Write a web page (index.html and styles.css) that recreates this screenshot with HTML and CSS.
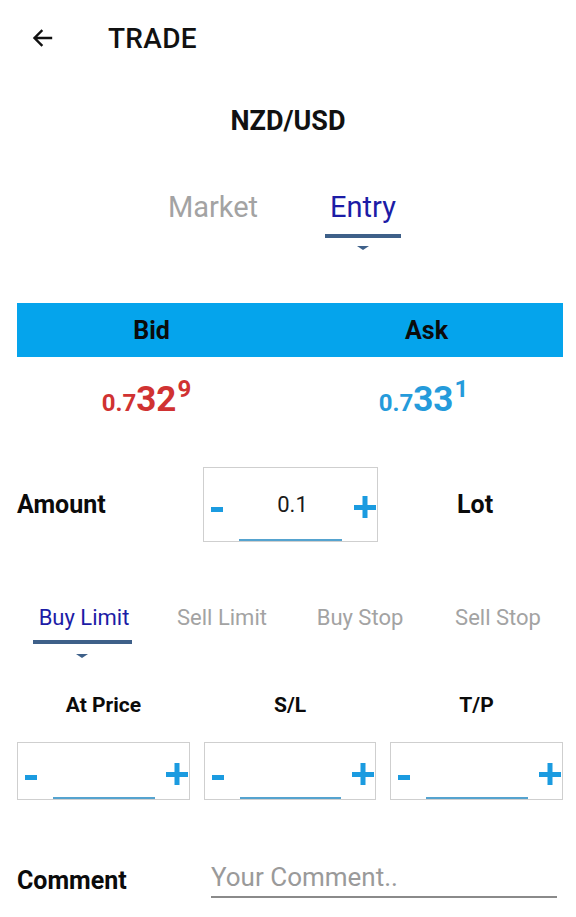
FILE: index.html
```html
<!DOCTYPE html>
<html>
<head>
<meta charset="utf-8">
<link rel="stylesheet" href="styles.css">
</head>
<body>
<div class="screen">
  <header class="topbar">
    <svg class="back" width="24" height="24" viewBox="0 0 24 24"><path d="M21 12H5M11.5 5l-7 7 7 7" fill="none" stroke="#111" stroke-width="2.4" stroke-linecap="square"/></svg>
    <span class="title">TRADE</span>
  </header>

  <div class="pair">NZD/USD</div>

  <div class="tabs">
    <div class="tab">Market</div>
    <div class="tab active">Entry<span class="bar"></span><span class="caret"></span></div>
  </div>

  <div class="quote-head">
    <div>Bid</div>
    <div>Ask</div>
  </div>
  <div class="quotes">
    <div class="price bid"><span class="small">0.7</span><span class="big">32</span><sup>9</sup></div>
    <div class="price ask"><span class="small">0.7</span><span class="big">33</span><sup>1</sup></div>
  </div>

  <div class="amount-row">
    <div class="label">Amount</div>
    <div class="stepper tall">
      <span class="minus"></span>
      <span class="value">0.1</span>
      <svg class="plus" width="22" height="22" viewBox="0 0 22 22"><path d="M0 9h22v5H0zM8.5 0h5v22h-5z" fill="#1b9be0"/></svg>
      <span class="line"></span>
    </div>
    <div class="label lot">Lot</div>
  </div>

  <div class="subtabs">
    <div class="subtab active">Buy Limit<span class="bar"></span><span class="caret"></span></div>
    <div class="subtab">Sell Limit</div>
    <div class="subtab">Buy Stop</div>
    <div class="subtab">Sell Stop</div>
  </div>

  <div class="fields">
    <div class="field">
      <div class="flabel">At Price</div>
      <div class="stepper">
        <span class="minus"></span>
        <svg class="plus" width="22" height="22" viewBox="0 0 22 22"><path d="M0 9h22v5H0zM8.5 0h5v22h-5z" fill="#1b9be0"/></svg>
        <span class="line"></span>
      </div>
    </div>
    <div class="field">
      <div class="flabel">S/L</div>
      <div class="stepper">
        <span class="minus"></span>
        <svg class="plus" width="22" height="22" viewBox="0 0 22 22"><path d="M0 9h22v5H0zM8.5 0h5v22h-5z" fill="#1b9be0"/></svg>
        <span class="line"></span>
      </div>
    </div>
    <div class="field">
      <div class="flabel">T/P</div>
      <div class="stepper">
        <span class="minus"></span>
        <svg class="plus" width="22" height="22" viewBox="0 0 22 22"><path d="M0 9h22v5H0zM8.5 0h5v22h-5z" fill="#1b9be0"/></svg>
        <span class="line"></span>
      </div>
    </div>
  </div>

  <div class="comment-row">
    <div class="label">Comment</div>
    <div class="comment-input">Your Comment..</div>
  </div>
</div>
</body>
</html>
```

FILE: styles.css
```css
* { box-sizing: border-box; }
html, body { margin: 0; padding: 0; background: #fff; }
body { font-family: Roboto, "Noto Sans", sans-serif; color: #111; }
.screen { width: 576px; height: 917px; overflow: hidden; }

.topbar { height: 76px; display: flex; align-items: center; padding-left: 30px; }
.back { display: block; }
.title { margin-left: 54px; font-size: 28px; font-weight: 500; letter-spacing: 0.3px; color: #111; }

.pair { margin-top: 24px; height: 42px; line-height: 42px; text-align: center; font-size: 27px; font-weight: 700; color: #111; }

.tabs { margin-top: 49px; display: flex; justify-content: center; height: 70px; }
.tab { width: 150px; position: relative; text-align: center; font-size: 29px; line-height: 32px; color: #a3a3a3; }
.tab.active { color: #1c1ca6; }
.tab .bar { position: absolute; left: 37px; right: 37px; top: 43px; height: 4px; background: #3e6089; }
.tab .caret { position: absolute; left: 69px; top: 55px; border-left: 6px solid transparent; border-right: 6px solid transparent; border-top: 4px solid #3e6089; }

.quote-head { margin: 42px 13px 0 17px; height: 54px; background: #05a4ec; display: grid; grid-template-columns: 1fr 1fr; align-items: center; text-align: center; font-size: 25px; font-weight: 700; color: #0b0b0b; }
.quote-head div:first-child { padding-right: 4px; }

.quotes { margin: 21px 13px 0 17px; display: grid; grid-template-columns: 1fr 1fr; height: 44px; }
.price { text-align: center; font-weight: 700; line-height: 44px; }
.price .small { font-size: 24px; }
.price .big { font-size: 35px; }
.price sup { font-size: 24px; vertical-align: 0; position: relative; top: -14px; margin-left: 1px; }
.bid { color: #d03232; padding-right: 14px; }
.ask { color: #259bdb; padding-right: 6px; }

.amount-row { margin-top: 45px; display: grid; grid-template-columns: 186px 175px 1fr; align-items: center; padding-left: 17px; }
.label { font-size: 25px; font-weight: 700; color: #0b0b0b; }
.label.lot { padding-left: 79px; }

.stepper { position: relative; height: 58px; border: 1.5px solid #cfcfcf; display: flex; align-items: center; justify-content: space-between; padding: 6px 1px 0 7px; }
.stepper.tall { height: 75px; padding-top: 4px; }
.stepper .minus { display: block; width: 12px; height: 5px; background: #1b9be0; margin-top: 6px; }
.stepper .plus { display: block; }
.stepper .value { font-size: 22px; color: #1a1a1a; margin-left: 8px; margin-top: -4px; }
.stepper .line { position: absolute; left: 35px; right: 35px; bottom: 0; height: 2px; background: #55a3cf; }

.subtabs { margin-top: 62px; padding-left: 15px; display: grid; grid-template-columns: repeat(4, 138px); height: 87px; }
.subtab { position: relative; text-align: center; font-size: 22px; line-height: 28px; color: #a3a3a3; }
.subtab.active { color: #1c1ca6; }
.subtab .bar { position: absolute; left: 18px; right: 21px; top: 36px; height: 4px; background: #3e6089; }
.subtab .caret { position: absolute; left: 61px; top: 50px; border-left: 6px solid transparent; border-right: 6px solid transparent; border-top: 4px solid #3e6089; }

.fields { margin-top: 0; padding: 0 13px 0 17px; display: grid; grid-template-columns: 173px 172px 173px; column-gap: 14px; }
.flabel { text-align: center; font-size: 21px; font-weight: 700; color: #0b0b0b; height: 28px; line-height: 28px; margin-bottom: 23px; }
.field .stepper .line { left: 35px; right: 34px; }

.comment-row { margin-top: 62px; display: flex; align-items: center; padding-left: 17px; }
.comment-row .label { font-size: 25px; width: 194px; }
.comment-input { width: 346px; font-size: 26px; color: #9a9a9a; border-bottom: 2px solid #8a8a8a; padding-bottom: 4px; line-height: 30px; }
```
